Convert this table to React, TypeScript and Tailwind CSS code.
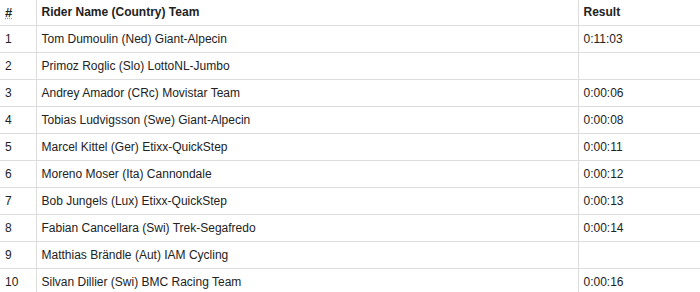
import React from 'react';

type Row = { pos: number; rider: string; result: string };

const rows: Row[] = [
  { pos: 1, rider: 'Tom Dumoulin (Ned) Giant-Alpecin', result: '0:11:03' },
  { pos: 2, rider: 'Primoz Roglic (Slo) LottoNL-Jumbo', result: '' },
  { pos: 3, rider: 'Andrey Amador (CRc) Movistar Team', result: '0:00:06' },
  { pos: 4, rider: 'Tobias Ludvigsson (Swe) Giant-Alpecin', result: '0:00:08' },
  { pos: 5, rider: 'Marcel Kittel (Ger) Etixx-QuickStep', result: '0:00:11' },
  { pos: 6, rider: 'Moreno Moser (Ita) Cannondale', result: '0:00:12' },
  { pos: 7, rider: 'Bob Jungels (Lux) Etixx-QuickStep', result: '0:00:13' },
  { pos: 8, rider: 'Fabian Cancellara (Swi) Trek-Segafredo', result: '0:00:14' },
  { pos: 9, rider: 'Matthias Brändle (Aut) IAM Cycling', result: '' },
  { pos: 10, rider: 'Silvan Dillier (Swi) BMC Racing Team', result: '0:00:16' },
];

const App: React.FC = () => {
  return (
    <div className="w-[700px] h-[292px] overflow-hidden bg-white font-['Liberation_Sans',Arial,sans-serif] text-[12px] text-[#222]">
      <table className="w-full table-fixed border-collapse">
        <colgroup>
          <col className="w-[36px]" />
          <col className="w-[542px]" />
          <col />
        </colgroup>
        <thead>
          <tr className="border-b border-[#ddd]">
            <th className="h-[25px] px-[5px] text-left font-bold border-r border-[#ddd]">
              <abbr title="Position" className="text-[13px] underline decoration-dotted decoration-[#999]">#</abbr>
            </th>
            <th className="h-[25px] px-[5px] text-left font-bold border-r border-[#ddd]">Rider Name (Country) Team</th>
            <th className="h-[25px] px-[5px] text-left font-bold">Result</th>
          </tr>
        </thead>
        <tbody>
          {rows.map((r) => (
            <tr key={r.pos} className="border-b border-[#ddd]">
              <td className="h-[27px] px-[5px] border-r border-[#ddd]">{r.pos}</td>
              <td className="h-[27px] px-[5px] border-r border-[#ddd]">{r.rider}</td>
              <td className="h-[27px] px-[5px]">{r.result}</td>
            </tr>
          ))}
        </tbody>
      </table>
    </div>
  );
};

export default App;
